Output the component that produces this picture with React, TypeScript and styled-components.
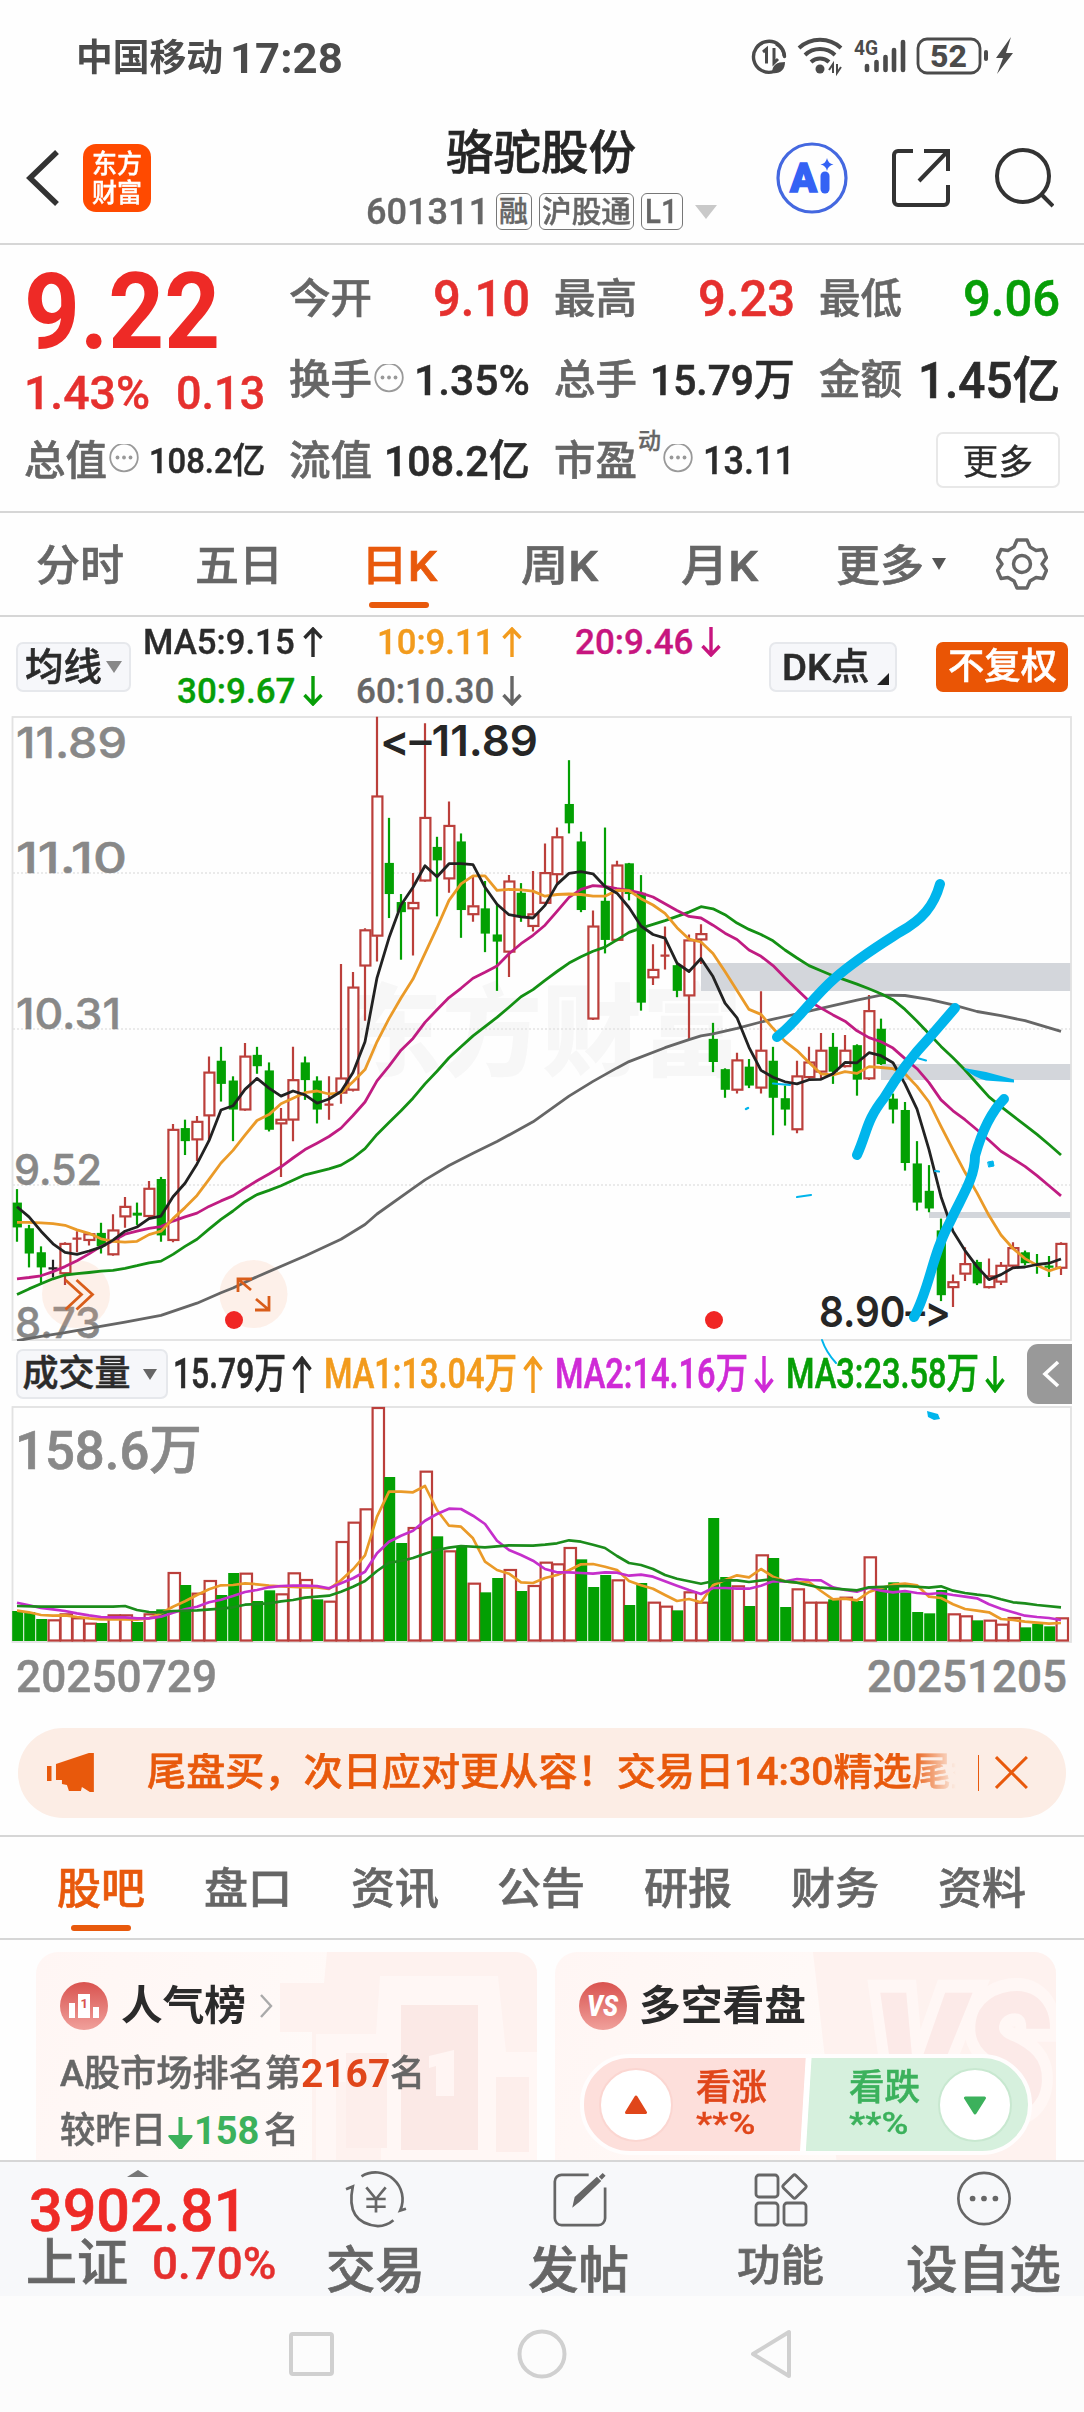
import React, { useLayoutEffect, useRef, useState } from "react";
import styled, { createGlobalStyle } from "styled-components";

const ORANGE = "#e8590c";
const GRAY = "#666";
const DARK = "#2b2b2b";
const RED = "#ee2a26";
const GREEN = "#079e07";
const LINE = "#d6d6d6";
const UP = "#bb3f3b";
const DOWN = "#03a003";
const INK = "#00b5ec";

const Global = createGlobalStyle`
  * { box-sizing: border-box; }
  body { margin: 0; background: #fff; }
  body, svg text { font-family: Roboto, "Noto Sans CJK SC", sans-serif; }
`;

/* ---------- text fitted to a column width ---------- */

const FitBox = styled.span<{ $w: number; $size: number; $color: string; $weight: number; $shift: number; $stroke: number }>`
  display: block;
  flex: none;
  width: ${(p) => p.$w}px;
  height: ${(p) => p.$size}px;
  font-size: ${(p) => p.$size}px;
  line-height: 1;
  font-weight: ${(p) => p.$weight};
  color: ${(p) => p.$color};
  -webkit-text-stroke: ${(p) => p.$stroke}px currentColor;
  margin-top: ${(p) => p.$shift}px;
  white-space: nowrap;
`;
const FitInner = styled.span`
  display: inline-block;
  transform-origin: 0 50%;
`;

type FitProps = { w: number; size: number; color?: string; weight?: number; shift?: number; children: React.ReactNode };

/* Medium text is thickened with a fine stroke; Chinese glyphs need a little more of it than digits. */
const isHan = (t: React.ReactNode) => typeof t === "string" && /[\u4e00-\u9fff]/.test(t);

function Fit({ w, size, color = GRAY, weight = 500, shift = 0, children }: FitProps) {
  const ref = useRef<HTMLSpanElement>(null);
  const [scale, setScale] = useState(1);
  useLayoutEffect(() => {
    if (ref.current) setScale(w / ref.current.offsetWidth);
  }, [w]);
  const stroke = weight !== 500 ? 0 : size * (isHan(children) ? 0.014 : 0.01);
  return (
    <FitBox $w={w} $size={size} $color={color} $weight={weight} $shift={shift} $stroke={stroke}>
      <FitInner ref={ref} style={{ transform: `scaleX(${scale})` }}>
        {children}
      </FitInner>
    </FitBox>
  );
}

/* ---------- page and shared pieces ---------- */

const Page = styled.main`
  position: relative;
  width: 1084px;
  height: 2412px;
  overflow: hidden;
  display: flex;
  flex-direction: column;
  background: #fefefe;
  > * { flex-shrink: 0; }
`;
const Row = styled.div<{ $gap?: number }>`
  display: flex;
  align-items: center;
  gap: ${(p) => p.$gap ?? 0}px;
`;
const Caret = styled.i<{ $w: number; $h: number; $color: string }>`
  width: 0;
  height: 0;
  border: solid transparent;
  border-width: ${(p) => p.$h}px ${(p) => p.$w / 2}px 0;
  border-top-color: ${(p) => p.$color};
`;

/* ---------- status bar ---------- */

const StatusBar = styled.header`
  height: 112px;
  padding: 4px 68px 0 76px;
  display: flex;
  align-items: center;
  justify-content: space-between;
`;

function StatusIcons() {
  const c = "#4b4b4b";
  return (
    <svg width="266" height="44" viewBox="750 36 266 44" fill="none" stroke={c} strokeWidth="3.4">
      <path d="M774 71.5a15.5 15.5 0 1 1 10.500-15" strokeLinecap="round" />
      <path d="M784 56a15.500 15.500 0 0 0-8-12M763 52l3.500-3v14.500M774 48v15l4-4" strokeWidth="3" />
      <path d="M772 73c0-8 5-11 13-11 0 8-5 12-13 11z" fill={c} stroke="none" />
      <path d="M799 48a31 31 0 0 1 42 0M805 55a22 22 0 0 1 30 0M811 62a13 13 0 0 1 18 0" strokeWidth="4" />
      <circle cx="820" cy="69" r="4.500" fill={c} stroke="none" />
      <path d="M829 70l4-6v9M837 64v9l4-6" strokeWidth="2" />
      <g strokeWidth="4.600" strokeLinecap="round">
        <path d="M867 66v4M876.500 62v8M885.500 57v13M894 50v20M903 42v28" />
      </g>
      <text x="854" y="55" fontSize="20" fontWeight="700" fill={c} stroke="none" textLength="24" lengthAdjust="spacingAndGlyphs">
        4G
      </text>
      <rect x="918" y="39" width="62" height="34" rx="9" strokeWidth="2.800" />
      <text x="930" y="67" fontSize="31" fontWeight="800" fill={c} stroke="none" textLength="37" lengthAdjust="spacingAndGlyphs">
        52
      </text>
      <path d="M986 52v7" strokeWidth="4" strokeLinecap="round" />
      <path d="M1011 37l-15 21h7l-6 16 16-21h-7z" fill={c} stroke="none" />
    </svg>
  );
}

/* ---------- title bar ---------- */

const TitleBar = styled.nav`
  height: 133px;
  padding: 0 30px 0 25px;
  display: grid;
  grid-template-columns: 1fr auto 1fr;
  align-items: center;
  border-bottom: 2px solid ${LINE};
`;
const Logo = styled.div`
  width: 68px;
  height: 68px;
  border-radius: 13px;
  background: #ff4a00;
  padding: 7px 9px 0;
  margin-left: 23px;
`;
const TitleColumn = styled.div`
  display: flex;
  flex-direction: column;
  align-items: center;
  gap: 17px;
  padding: 4px 0 0 3px;
`;
const Tag = styled.span<{ $w: number }>`
  width: ${(p) => p.$w}px;
  height: 37px;
  border: 1.500px solid #777;
  border-radius: 6px;
  display: flex;
  align-items: center;
  justify-content: center;
`;
const TitleActions = styled.div`
  display: flex;
  justify-content: flex-end;
  align-items: center;
  gap: 43px;
`;
const TriangleSpacer = styled.span`
  margin-left: 5px;
  display: flex;
`;
const CodeRow = styled.div`
  display: flex;
  align-items: center;
  gap: 7px;
`;

function TitleHeader() {
  return (
    <TitleBar>
      <Row>
        <svg width="35" height="60" viewBox="0 0 35 60" fill="none" stroke="#333" strokeWidth="5.500">
          <path d="M32 4L5 30l27 26" />
        </svg>
        <Logo>
          <Fit w={50} size={26} color="#fff" weight={500}>东方</Fit>
          <Fit w={50} size={26} color="#fff" weight={500} shift={3}>财富</Fit>
        </Logo>
      </Row>
      <TitleColumn>
        <Fit w={190} size={47} color="#262626">骆驼股份</Fit>
        <CodeRow>
          <Fit w={123} size={37}>601311</Fit>
          <Tag $w={36}><Fit w={29} size={29} shift={1}>融</Fit></Tag>
          <Tag $w={95}><Fit w={89} size={30} shift={1}>沪股通</Fit></Tag>
          <Tag $w={42}><Fit w={33} size={33}>L1</Fit></Tag>
          <TriangleSpacer><Caret $w={22} $h={14} $color="#c9c9c9" /></TriangleSpacer>
        </CodeRow>
      </TitleColumn>
      <TitleActions>
        <svg width="72" height="72" viewBox="0 0 72 72">
          <circle cx="36" cy="36" r="34" fill="none" stroke="#4468e0" strokeWidth="3.200" />
          <text x="14" y="50" fontSize="41" fontWeight="900" fill="#3462f4" stroke="#3462f4" strokeWidth="1.500" textLength="27" lengthAdjust="spacingAndGlyphs">A</text>
          <path d="M49 34v13" stroke="#3462f4" strokeWidth="9" strokeLinecap="round" />
          <path d="M51 16q1 5.500 6.500 6.500Q52 23.500 51 29q-1-5.500-6.500-6.500Q50 21.500 51 16z" fill="#3462f4" />
        </svg>
        <svg width="60" height="60" viewBox="0 0 60 60" fill="none" stroke="#333" strokeWidth="4">
          <path d="M22 3H7a4 4 0 0 0-4 4v46a4 4 0 0 0 4 4h46a4 4 0 0 0 4-4V37M33 3h24v20M57 3L28 33" />
        </svg>
        <svg width="60" height="60" viewBox="0 0 60 60" fill="none" stroke="#333" strokeWidth="4">
          <circle cx="29" cy="28" r="26" />
          <path d="M47 46l12 12" />
        </svg>
      </TitleActions>
    </TitleBar>
  );
}

/* ---------- quote summary ---------- */

const Quotes = styled.section`
  height: 268px;
  padding: 13px 24px 0 24px;
  display: grid;
  grid-template-columns: repeat(4, 241px);
  grid-template-rows: 81px 81px 80px;
  column-gap: 24px;
  border-bottom: 2px solid ${LINE};
`;
const PriceCell = styled.div`
  grid-row: span 2;
  padding-top: 2px;
`;
const Cell = styled.div`
  display: flex;
  align-items: center;
  justify-content: space-between;
`;
const MoreButton = styled.button`
  margin-left: auto;
  width: 124px;
  height: 56px;
  padding: 0;
  border: 2px solid #e8e8e8;
  border-radius: 7px;
  background: #fff;
  display: flex;
  align-items: center;
  justify-content: center;
`;
const Sup = styled.span`
  margin: 0 0 38px 1px;
`;

const Info = () => (
  <svg width="32" height="32" viewBox="0 0 32 32">
    <circle cx="17" cy="13.500" r="13.800" fill="none" stroke="#999" strokeWidth="1.800" />
    <g fill="#999">
      <circle cx="10.500" cy="13.500" r="1.900" />
      <circle cx="17" cy="13.500" r="1.900" />
      <circle cx="23.500" cy="13.500" r="1.900" />
    </g>
  </svg>
);
const Label = ({ children }: { children: string }) => <Fit w={83} size={41} shift={2}>{children}</Fit>;

function QuoteGrid() {
  return (
    <Quotes>
      <PriceCell>
        <Fit w={196} size={105} color={RED} weight={700}>9.22</Fit>
        <Row $gap={26}>
          <Fit w={126} size={46} color="#e5302e" shift={5}>1.43%</Fit>
          <Fit w={89} size={46} color="#e5302e" shift={5}>0.13</Fit>
        </Row>
      </PriceCell>
      <Cell><Label>今开</Label><Fit w={97} size={50} color="#e5302e" shift={1}>9.10</Fit></Cell>
      <Cell><Label>最高</Label><Fit w={97} size={50} color="#e5302e" shift={1}>9.23</Fit></Cell>
      <Cell><Label>最低</Label><Fit w={97} size={50} color={GREEN} shift={1}>9.06</Fit></Cell>
      <Cell><Row><Label>换手</Label><Info /></Row><Fit w={116} size={43} color={DARK} shift={2}>1.35%</Fit></Cell>
      <Cell><Label>总手</Label><Fit w={145} size={43} color={DARK} shift={2}>15.79万</Fit></Cell>
      <Cell><Label>金额</Label><Fit w={142} size={50} color={DARK} shift={2}>1.45亿</Fit></Cell>
      <Cell><Row><Label>总值</Label><Info /></Row><Fit w={116} size={35} color={DARK} shift={2}>108.2亿</Fit></Cell>
      <Cell><Label>流值</Label><Fit w={146} size={43} color={DARK} shift={3}>108.2亿</Fit></Cell>
      <Cell>
        <Row><Label>市盈</Label><Sup><Fit w={23} size={23}>动</Fit></Sup><Info /></Row>
        <Fit w={92} size={38} color={DARK} shift={2}>13.11</Fit>
      </Cell>
      <Cell><MoreButton><Fit w={71} size={35} color={DARK}>更多</Fit></MoreButton></Cell>
    </Quotes>
  );
}

/* ---------- period tabs ---------- */

const Periods = styled.nav`
  height: 104px;
  padding-right: 36px;
  display: grid;
  grid-template-columns: 159px 159px 162px 159px 160px 1fr auto;
  align-items: center;
  border-bottom: 2px solid ${LINE};
`;
const Tab = styled.div<{ $active?: boolean; $top?: number }>`
  height: 102px;
  display: flex;
  flex-direction: column;
  align-items: center;
  padding-top: ${(p) => p.$top ?? 32}px;
  gap: 14px;
  &::after {
    content: "";
    width: 60px;
    height: 6px;
    border-radius: 3px;
    background: ${(p) => (p.$active ? ORANGE : "transparent")};
  }
`;
const MoreTab = styled.div`
  padding-left: 37px;
  display: flex;
  align-items: center;
  gap: 8px;
`;

function PeriodTabs() {
  return (
    <Periods>
      <Tab><Fit w={88} size={43}>分时</Fit></Tab>
      <Tab><Fit w={88} size={43}>五日</Fit></Tab>
      <Tab $active><Fit w={76} size={43} color={ORANGE}>日K</Fit></Tab>
      <Tab><Fit w={77} size={43}>周K</Fit></Tab>
      <Tab><Fit w={77} size={43}>月K</Fit></Tab>
      <MoreTab><Tab><Fit w={88} size={43}>更多</Fit></Tab><Caret $w={15} $h={12} $color="#555" /></MoreTab>
      <svg width="52" height="54" viewBox="0 0 52 54" fill="none" stroke={GRAY} strokeWidth="3.400" strokeLinejoin="round">
        <path d="M21 3h10l3 7 6 3.500 7-1 3.500 8L46 27l4.500 6.500-3.500 8-7-1-6 3.500-3 7H21l-3-7-6-3.500-7 1-3.500-8L6 27l-4.500-6.500 3.500-8 7 1 6-3.500z" />
        <circle cx="26" cy="27" r="8.500" />
      </svg>
    </Periods>
  );
}

/* ---------- moving-average legend ---------- */

const Legend = styled.div`
  height: 99px;
  padding: 0 16px;
  display: flex;
  align-items: center;
`;
const Chip = styled.div<{ $w: number; $solid?: boolean }>`
  flex: none;
  width: ${(p) => p.$w}px;
  height: 50px;
  border-radius: 7px;
  border: ${(p) => (p.$solid ? "0" : "2px solid #e6e8ec")};
  background: ${(p) => (p.$solid ? "#ea5505" : "#f6f7fa")};
  display: flex;
  align-items: center;
  justify-content: center;
  gap: 4px;
`;
const MaGrid = styled.div`
  width: 577px;
  margin-left: 12px;
  display: grid;
  grid-template-columns: 180px 199px 199px;
  row-gap: 15px;
`;
const MaItem = styled.div`
  display: flex;
  align-items: center;
  justify-content: flex-end;
  gap: 8px;
  height: 34px;
`;
const ChipGap = styled.span<{ $w: number }>`
  width: ${(p) => p.$w}px;
  flex: none;
`;
const CornerMark = styled.i`
  align-self: flex-end;
  width: 0;
  height: 0;
  margin-bottom: 5px;
  margin-left: 3px;
  border-left: 12px solid transparent;
  border-bottom: 12px solid #222;
`;

function Arrow({ up, color, h = 30, w = 20 }: { up?: boolean; color: string; h?: number; w?: number }) {
  return (
    <svg width={w} height={h} viewBox="0 0 20 30" preserveAspectRatio="none" fill="none" stroke={color} strokeWidth="3.400">
      <path d={up ? "M10 30V2M1.500 11L10 2l8.500 9" : "M10 0v28M1.500 19l8.500 9 8.500-9"} />
    </svg>
  );
}

const MAS = [
  { text: "MA5:9.15", w: 152, color: DARK, up: true },
  { text: "10:9.11", w: 117, color: "#f29b1d", up: true },
  { text: "20:9.46", w: 118, color: "#c7157f", up: false },
  { text: "30:9.67", w: 118, color: GREEN, up: false },
  { text: "60:10.30", w: 138, color: GRAY, up: false },
];

function LegendRow() {
  return (
    <Legend>
      <Chip $w={115}><Fit w={77} size={38} color={DARK}>均线</Fit><Caret $w={16} $h={12} $color="#888" /></Chip>
      <MaGrid>
        {MAS.map((m) => (
          <MaItem key={m.text}>
            <Fit w={m.w} size={35} color={m.color} shift={1}>{m.text}</Fit>
            <Arrow up={m.up} color={m.color} />
          </MaItem>
        ))}
      </MaGrid>
      <ChipGap $w={49} />
      <Chip $w={128}><ChipGap $w={1} /><Fit w={88} size={37} color={DARK} shift={1}>DK点</Fit><CornerMark /></Chip>
      <ChipGap $w={39} />
      <Chip $w={132} $solid><Fit w={109} size={36} color="#fff">不复权</Fit></Chip>
    </Legend>
  );
}

/* ---------- candlestick chart ---------- */

/* colour (g/r/k), high, body top, body bottom, low in plot units */
type Candle = [string, number, number, number, number];
const CANDLES: Candle[] = [
  ["g", 1162, 1194, 1253, 1287], ["g", 1247, 1255, 1315, 1348], ["g", 1298, 1312, 1348, 1385], ["k", 1330, 1349, 1352, 1372],
  ["r", 1288, 1291, 1363, 1390], ["r", 1262, 1278, 1281, 1312], ["r", 1266, 1268, 1284, 1296], ["g", 1242, 1266, 1298, 1315],
  ["r", 1222, 1259, 1318, 1320], ["r", 1181, 1203, 1228, 1254], ["g", 1194, 1218, 1225, 1247], ["r", 1143, 1160, 1227, 1230],
  ["g", 1133, 1138, 1272, 1287], ["r", 1007, 1020, 1284, 1288], ["g", 997, 1017, 1048, 1081], ["r", 988, 1001, 1045, 1095],
  ["r", 847, 884, 988, 1045], ["g", 824, 857, 912, 954], ["g", 894, 904, 973, 1048], ["r", 815, 846, 974, 976],
  ["g", 824, 843, 870, 888], ["g", 861, 880, 1021, 1025], ["r", 969, 996, 1007, 1133], ["r", 824, 902, 998, 1048],
  ["g", 847, 861, 903, 950], ["g", 894, 904, 973, 1006], ["r", 894, 959, 964, 997], ["r", 627, 898, 934, 959],
  ["r", 646, 682, 927, 930], ["r", 542, 546, 632, 762], ["r", 40, 228, 561, 621], ["g", 280, 387, 461, 518],
  ["g", 461, 480, 504, 617], ["r", 411, 481, 496, 607], ["r", 55, 279, 430, 432], ["g", 325, 349, 381, 514],
  ["r", 241, 298, 425, 458], ["g", 317, 336, 499, 565], ["r", 420, 489, 510, 527], ["g", 430, 495, 555, 599],
  ["g", 484, 557, 574, 691], ["r", 416, 430, 599, 658], ["g", 435, 458, 515, 527], ["r", 406, 508, 538, 550],
  ["r", 341, 410, 483, 485], ["r", 303, 325, 415, 435], ["g", 143, 247, 293, 317], ["g", 313, 336, 499, 504],
  ["r", 500, 537, 758, 760], ["g", 303, 477, 570, 602], ["r", 382, 392, 571, 573], ["g", 387, 388, 461, 476],
  ["g", 416, 458, 719, 738], ["r", 580, 640, 660, 677], ["r", 538, 606, 609, 640], ["g", 627, 630, 691, 706],
  ["r", 557, 570, 703, 807], ["r", 533, 555, 570, 627], ["g", 767, 805, 860, 884], ["g", 875, 877, 926, 945],
  ["r", 838, 855, 927, 935], ["g", 853, 871, 916, 922], ["r", 692, 832, 922, 935], ["g", 824, 857, 945, 1034],
  ["g", 916, 946, 973, 1011], ["r", 857, 893, 1021, 1029], ["r", 824, 860, 897, 900], ["r", 791, 832, 884, 900],
  ["g", 791, 824, 883, 912], ["r", 796, 832, 871, 873], ["g", 818, 820, 902, 940], ["r", 701, 738, 900, 903],
  ["g", 757, 781, 865, 867], ["g", 935, 947, 973, 1006], ["g", 955, 974, 1100, 1118], ["g", 1048, 1101, 1194, 1213],
  ["g", 1105, 1166, 1208, 1217], ["g", 1232, 1260, 1414, 1428], ["r", 1365, 1382, 1396, 1442], ["r", 1300, 1339, 1364, 1380],
  ["g", 1330, 1335, 1386, 1390], ["r", 1327, 1368, 1396, 1398], ["r", 1335, 1343, 1383, 1390], ["r", 1288, 1301, 1345, 1350],
  ["g", 1308, 1312, 1338, 1343], ["g", 1316, 1338, 1342, 1363], ["g", 1321, 1344, 1348, 1371], ["r", 1288, 1291, 1350, 1366],
];
const MA5 = [1204, 1228, 1262, 1292, 1312, 1317, 1309, 1300, 1283, 1262, 1252, 1232, 1226, 1180, 1148, 1102, 1047, 974, 964, 925, 899, 922, 941, 929, 938, 958, 948, 930, 885, 812, 660, 565, 487, 445, 394, 420, 389, 389, 391, 445, 485, 510, 515, 518, 488, 438, 412, 408, 413, 443, 459, 493, 537, 557, 566, 625, 645, 614, 657, 720, 755, 825, 880, 896, 907, 912, 902, 901, 888, 861, 862, 838, 845, 862, 912, 972, 1068, 1180, 1262, 1308, 1346, 1377, 1365, 1349, 1347, 1341, 1338, 1328];
const MA10 = [1241, 1241, 1242, 1244, 1248, 1259, 1267, 1280, 1286, 1288, 1286, 1270, 1262, 1232, 1206, 1177, 1139, 1100, 1070, 1034, 999, 985, 959, 946, 933, 929, 936, 934, 907, 878, 812, 757, 708, 663, 602, 541, 476, 437, 418, 418, 452, 450, 451, 454, 466, 462, 461, 462, 466, 466, 452, 453, 472, 487, 507, 541, 568, 575, 602, 645, 690, 735, 747, 780, 811, 833, 861, 888, 891, 883, 887, 871, 873, 876, 888, 918, 955, 1013, 1068, 1122, 1171, 1225, 1271, 1303, 1327, 1343, 1356, 1347];
const MA20 = [1375, 1372, 1368, 1358, 1346, 1332, 1316, 1298, 1285, 1269, 1262, 1255, 1251, 1238, 1228, 1219, 1203, 1190, 1178, 1160, 1142, 1126, 1109, 1088, 1068, 1053, 1037, 1017, 987, 955, 905, 870, 832, 804, 766, 736, 707, 685, 661, 647, 632, 603, 579, 559, 535, 502, 469, 450, 441, 443, 448, 452, 459, 468, 484, 500, 514, 518, 535, 554, 569, 594, 609, 631, 660, 688, 715, 732, 748, 763, 786, 802, 812, 827, 852, 876, 909, 950, 976, 997, 1021, 1046, 1072, 1090, 1108, 1130, 1154, 1178];
const MA30 = [1412, 1399, 1387, 1375, 1366, 1363, 1360, 1357, 1355, 1350, 1344, 1337, 1333, 1317, 1298, 1281, 1257, 1234, 1214, 1192, 1175, 1165, 1154, 1141, 1128, 1121, 1114, 1105, 1088, 1066, 1032, 1004, 976, 946, 912, 882, 850, 824, 798, 776, 754, 730, 705, 688, 666, 645, 625, 610, 597, 587, 570, 552, 542, 533, 524, 514, 504, 491, 496, 510, 530, 545, 557, 572, 594, 613, 631, 643, 655, 665, 675, 686, 698, 712, 735, 763, 793, 823, 850, 879, 911, 943, 966, 988, 1010, 1032, 1056, 1081];
const MA60: [number, number][] = [[0, 1522], [2, 1512], [4, 1503], [6, 1493], [9, 1478], [12, 1462], [15, 1433], [17, 1408], [18, 1397], [20, 1370], [24, 1321], [27, 1281], [29, 1246], [30, 1221], [33, 1160], [34, 1140], [36, 1106], [38, 1077], [40, 1049], [43, 1002], [46, 941], [48, 906], [50, 874], [51, 859], [54, 826], [56, 807], [57, 798], [58, 793], [60, 780], [62, 765], [64, 752], [66, 739], [68, 726], [70, 713], [72, 701], [74, 702], [76, 711], [78, 724], [80, 740], [82, 750], [84, 762], [87, 787]];

const cx = (i: number) => 17 + 12 * i;
const priceY = (v: number) => 700 + v / 2.3757;
const volY = (v: number) => 1400 + v / 3;
const line = (vals: number[], y: (v: number) => number) => vals.map((v, i) => `${cx(i)},${y(v).toFixed(1)}`).join(" ");
const sparse = (vals: [number, number][], y: (v: number) => number) => vals.map(([i, v]) => `${cx(i)},${y(v).toFixed(1)}`).join(" ");

const ChartFrame = styled.section`
  height: 625px;
  svg { display: block; }
`;
const AxisText = styled.text`
  && { font-family: Inter, sans-serif; }
  font-feature-settings: "calt" 0;
  font-size: 43px;
`;

function CandleShape({ c, i }: { c: Candle; i: number }) {
  const [kind, high, top, bottom, low] = c;
  const x = cx(i);
  const [h, t, b, l] = [high, top, bottom, low].map(priceY);
  const color = kind === "g" ? DOWN : kind === "k" ? "#222" : UP;
  if (bottom - top < 6) {
    return <path d={`M${x} ${h}V${l}M${x - 4.5} ${(t + b) / 2}h9`} stroke={color} strokeWidth="2.200" />;
  }
  if (kind === "g") {
    return (
      <g fill={color}>
        <rect x={x - 1.1} y={h} width="2.200" height={l - h} />
        <rect x={x - 4.3} y={t} width="9.200" height={b - t} />
      </g>
    );
  }
  return (
    <g stroke={color} strokeWidth="2.200" fill="none">
      <path d={`M${x} ${h}V${t}M${x} ${b}V${l}`} />
      <rect x={x - 4.6} y={t + 0.5} width="10" height={Math.max(b - t - 1, 2)} fill="#fff" />
    </g>
  );
}

const AXIS: [string, number, number, number][] = [
  ["11.89", 758, 16, 111], ["11.10", 873, 16, 111], ["10.31", 1029, 16, 105], ["9.52", 1185, 14, 88], ["8.73", 1338, 15, 86],
];

function PriceChart() {
  return (
    <ChartFrame>
      <svg width="1084" height="625" viewBox="0 716 1084 625">
        <text x="342" y="1068" fontSize="100" fontWeight="900" fill="#f7f7f7">东方财富</text>
        <rect x="701" y="963" width="370" height="28" fill="#d3d6db" />
        <rect x="881" y="1064" width="190" height="16" fill="#d3d6db" />
        <rect x="929" y="1212" width="142" height="6" fill="#d3d6db" />
        <g stroke="#e3e3e3" strokeWidth="1.500" strokeDasharray="2 2">
          <path d="M13 873H1071M13 1029H1071M13 1185H1071" />
        </g>
        <rect x="12.500" y="717" width="1058.500" height="623" fill="none" stroke="#e2e2e2" strokeWidth="1.800" />
        <g fill="#888" fontWeight="500" stroke="#888" strokeWidth=".5">
          {AXIS.map(([t, y, x, w]) => (
            <AxisText key={t} x={x} y={y} textLength={w} lengthAdjust="spacingAndGlyphs">{t}</AxisText>
          ))}
        </g>
        <circle cx="76" cy="1294" r="34" fill="#f7a57a" fillOpacity=".16" />
        <circle cx="253.500" cy="1294" r="34" fill="#f7a57a" fillOpacity=".16" />
        {CANDLES.map((c, i) => <CandleShape key={i} c={c} i={i} />)}
        <g fill="none" strokeWidth="2.800" strokeLinejoin="round">
          <polyline points={sparse(MA60, priceY)} stroke="#666" />
          <polyline points={line(MA30, priceY)} stroke="#149014" />
          <polyline points={line(MA20, priceY)} stroke="#c01c82" />
          <polyline points={line(MA10, priceY)} stroke="#ea9a28" />
          <polyline points={line(MA5, priceY)} stroke="#222" />
        </g>
        <g fill="none" stroke="#d95d1a" strokeWidth="2.800">
          <path d="M65.500 1280l16 14.500-16 15M76.500 1280l16 14.500-16 15M251 1290l-13-11M238 1292v-13h14M256 1299l13 11M269 1296v14h-14" />
        </g>
        <circle cx="234" cy="1320" r="9" fill="#f02624" />
        <circle cx="714" cy="1320" r="9" fill="#f02624" />
        <g fill="#262626" fontWeight="600">
          <AxisText x="380" y="756" textLength="158" lengthAdjust="spacingAndGlyphs">&lt;–11.89</AxisText>
          <AxisText x="819" y="1327" textLength="132" lengthAdjust="spacingAndGlyphs">8.90–&gt;</AxisText>
        </g>
      </svg>
    </ChartFrame>
  );
}

/* ---------- volume ---------- */

const VolumeHead = styled.div`
  height: 65px;
  padding: 1px 12px 0 16px;
  display: flex;
  align-items: center;
`;
const VolumeItem = styled.div<{ $ml: number }>`
  margin-left: ${(p) => p.$ml}px;
  display: flex;
  align-items: center;
  gap: 6px;
`;
const Collapse = styled.button`
  margin-left: auto;
  width: 45px;
  height: 60px;
  padding: 0 0 0 2px;
  border: 0;
  border-radius: 11px 0 0 11px;
  background: #999;
  display: flex;
  align-items: center;
  justify-content: center;
`;
const VOL: [string, number][] = [
  ["g", 633], ["g", 636], ["g", 657], ["r", 658], ["r", 640], ["r", 652], ["r", 668], ["g", 669], ["r", 643], ["r", 643], ["g", 666],
  ["r", 640], ["g", 628], ["r", 516], ["g", 555], ["r", 578], ["r", 540], ["g", 585], ["g", 519], ["r", 518], ["g", 603], ["g", 571],
  ["r", 580], ["r", 517], ["r", 537], ["g", 598], ["r", 602], ["r", 423], ["r", 365], ["r", 325], ["r", 21], ["g", 231], ["g", 429],
  ["r", 381], ["r", 212], ["g", 409], ["r", 451], ["g", 438], ["r", 548], ["g", 577], ["g", 534], ["r", 507], ["g", 573], ["r", 555],
  ["r", 485], ["r", 490], ["r", 441], ["g", 478], ["g", 561], ["g", 525], ["r", 538], ["g", 615], ["g", 549], ["r", 605], ["r", 617],
  ["g", 631], ["r", 574], ["r", 605], ["g", 354], ["g", 531], ["r", 556], ["g", 618], ["r", 463], ["g", 474], ["g", 621], ["r", 565],
  ["r", 605], ["r", 605], ["g", 598], ["r", 590], ["g", 603], ["r", 469], ["g", 560], ["g", 547], ["g", 577], ["g", 636], ["g", 640],
  ["g", 570], ["r", 640], ["r", 646], ["g", 661], ["r", 659], ["r", 671], ["r", 651], ["g", 682], ["g", 671], ["g", 679], ["r", 652],
];
const VM1 = [632, 637, 645, 647, 646, 651, 655, 658, 658, 658, 659, 655, 640, 620, 604, 585, 568, 556, 555, 550, 553, 557, 559, 561, 562, 562, 567, 541, 508, 466, 350, 275, 275, 277, 258, 330, 377, 380, 415, 485, 510, 521, 547, 549, 534, 525, 511, 493, 492, 500, 510, 543, 556, 566, 585, 603, 597, 607, 556, 540, 526, 532, 507, 530, 544, 548, 546, 573, 598, 596, 601, 576, 564, 554, 551, 556, 590, 594, 613, 627, 632, 637, 657, 660, 665, 668, 671, 669];
const VM2 = [608, 616, 624, 628, 633, 640, 646, 651, 652, 652, 655, 655, 650, 638, 628, 620, 607, 599, 588, 576, 570, 562, 558, 557, 557, 558, 565, 550, 535, 515, 460, 425, 407, 392, 362, 342, 326, 327, 347, 372, 422, 450, 465, 482, 507, 517, 517, 519, 521, 517, 518, 527, 524, 530, 544, 557, 570, 582, 564, 564, 566, 566, 557, 544, 544, 537, 540, 541, 562, 570, 575, 563, 572, 577, 573, 579, 582, 579, 585, 590, 595, 613, 626, 637, 647, 651, 654, 660];
const VM3: [number, number][] = [[0, 618], [2, 620], [8, 620], [9, 618], [10, 630], [11, 636], [12, 637], [13, 633], [15, 631], [17, 626], [18, 622], [19, 614], [21, 610], [22, 604], [23, 600], [24, 593], [26, 587], [27, 575], [28, 560], [29, 543], [30, 513], [31, 488], [32, 483], [33, 474], [34, 461], [35, 450], [36, 443], [37, 438], [39, 442], [41, 436], [43, 437], [44, 434], [45, 430], [46, 421], [47, 425], [48, 434], [49, 444], [50, 468], [51, 489], [52, 495], [53, 507], [54, 525], [55, 536], [56, 544], [57, 551], [58, 544], [59, 541], [60, 541], [61, 546], [63, 537], [64, 544], [65, 548], [66, 556], [67, 563], [70, 571], [71, 562], [74, 558], [76, 563], [77, 559], [78, 572], [79, 579], [80, 584], [81, 588], [82, 598], [83, 607], [84, 610], [85, 615], [87, 622]];

const VOLUME_ITEMS = [
  { text: "15.79万", w: 113, color: DARK, up: true, ml: 5 },
  { text: "MA1:13.04万", w: 193, color: "#f29b1d", up: true, ml: 12 },
  { text: "MA2:14.16万", w: 193, color: "#cf2ad6", up: false, ml: 12 },
  { text: "MA3:23.58万", w: 193, color: GREEN, up: false, ml: 12 },
];
const Dates = styled.div`
  height: 84px;
  padding: 11px 17px 0 16px;
  display: flex;
  justify-content: space-between;
`;

function Volume() {
  return (
    <>
      <VolumeHead>
        <Chip $w={152}><Fit w={108} size={36} color={DARK}>成交量</Fit><ChipGap $w={4} /><Caret $w={15} $h={11} $color="#666" /><ChipGap $w={1} /></Chip>
        {VOLUME_ITEMS.map((v) => (
          <VolumeItem key={v.text} $ml={v.ml}>
            <Fit w={v.w} size={42} color={v.color}>{v.text}</Fit>
            <Arrow up={v.up} color={v.color} h={37} />
          </VolumeItem>
        ))}
        <Collapse>
          <svg width="18" height="28" viewBox="0 0 18 28" fill="none" stroke="#fff" strokeWidth="3.600"><path d="M16 2L3 14l13 12" /></svg>
        </Collapse>
      </VolumeHead>
      <svg width="1084" height="238" viewBox="0 1406 1084 238">
        <rect x="12.500" y="1407" width="1058.500" height="235" fill="none" stroke="#e2e2e2" strokeWidth="1.800" />
        <text x="15" y="1469" fontSize="54" fontWeight="500" fill="#888" stroke="#888" strokeWidth=".7" textLength="187" lengthAdjust="spacingAndGlyphs">158.6万</text>
        {VOL.map(([k, v], i) =>
          k === "g" ? (
            <rect key={i} x={cx(i) - 4.8} y={volY(v)} width="11" height={1641 - volY(v)} fill={DOWN} />
          ) : (
            <rect key={i} x={cx(i) - 4.4} y={volY(v) + 1} width="11.400" height={1639.5 - volY(v)} fill="#fff" stroke={UP} strokeWidth="2.200" />
          )
        )}
        <g fill="none" strokeWidth="2.700" strokeLinejoin="round">
          <polyline points={line(VM1, volY)} stroke="#ea9a28" />
          <polyline points={line(VM2, volY)} stroke="#c52fcb" />
          <polyline points={sparse(VM3, volY)} stroke="#1b8c1b" />
        </g>
      </svg>
      <Dates>
        <Fit w={201} size={44} color="#888">20250729</Fit>
        <Fit w={200} size={44} color="#888">20251205</Fit>
      </Dates>
    </>
  );
}

/* ---------- hand-drawn strokes over the charts ---------- */

const Sketch = styled.svg`
  position: absolute;
  left: 730px;
  top: 860px;
  pointer-events: none;
`;

function Strokes() {
  return (
    <Sketch width="340" height="580" viewBox="730 860 340 580" fill="none" stroke={INK} strokeLinecap="round" strokeLinejoin="round">
      <g strokeWidth="10">
        <path d="M777 1037C796 1023 812 998 835 978S878 946 900 932C922 920 934 906 940 884" />
        <path d="M955 1008L930 1037C910 1058 896 1078 884 1098C866 1121 868 1130 857 1155" />
        <path d="M1004 1099C988 1115 980 1138 975 1156C975 1178 962 1196 950 1222C932 1254 930 1288 914 1317" />
      </g>
      <path d="M964 1068l22 4 28 7.500v3l-28-2q-12-3-22-12z" fill={INK} stroke="none" />
      <path d="M773 1083.500l17 1.500M797 1197l14-2M919 1058.500l7 2M935 1171l4 .5" strokeWidth="2.200" />
      <path d="M746 1109l2-1" strokeWidth="2.500" />
      <path d="M988 1162l5-1 1 5-5 1z" fill={INK} strokeWidth="1" />
      <path d="M822 1340q4 12 14 23" strokeWidth="2" />
      <path d="M927 1411l11 3 2 5-6 1-6-3z" fill={INK} stroke="none" />
    </Sketch>
  );
}

/* ---------- promotion banner ---------- */

const Banner = styled.aside`
  margin: 0 18px 17px;
  height: 90px;
  border-radius: 45px;
  background: #fcede5;
  display: flex;
  align-items: center;
  padding: 0 37px 0 29px;
`;
const BannerText = styled.div`
  width: 815px;
  margin-left: 52px;
  padding-bottom: 1px;
  overflow: hidden;
  mask-image: linear-gradient(90deg, #000 94%, transparent 99.500%);
`;
const Divider = styled.i`
  width: 1.500px;
  height: 36px;
  margin: 0 16px 0 18px;
  background: ${ORANGE};
`;

function Promo() {
  return (
    <Banner>
      <svg width="48" height="42" viewBox="0 0 48 42" fill="#e8590c">
        <path d="M0 14h4.500v15H0zM9 12L42 1h5v39h-4l-8-5-1 4H22l-2-6-5-1v-4L9 28z" />
      </svg>
      <BannerText>
        <Fit w={843} size={39} color={ORANGE}>尾盘买，次日应对更从容！交易日14:30精选尾盘</Fit>
      </BannerText>
      <Divider />
      <svg width="34" height="34" viewBox="0 0 34 34" stroke={ORANGE} strokeWidth="3"><path d="M1 1l31 31M32 1L1 32" /></svg>
    </Banner>
  );
}

/* ---------- content tabs and cards ---------- */

const ContentTabs = styled.nav`
  height: 105px;
  padding: 0 58px 0 57px;
  display: flex;
  justify-content: space-between;
  border-top: 2px solid ${LINE};
  border-bottom: 2px solid ${LINE};
`;
const Cards = styled.section`
  height: 220px;
  padding: 12px 28px 0 36px;
  display: flex;
  gap: 18px;
  overflow: hidden;
`;
const Card = styled.article`
  position: relative;
  width: 501px;
  height: 240px;
  border-radius: 22px;
  background: linear-gradient(110deg, #fff6f4, #fffaf8 60%, #fff5f3);
  overflow: hidden;
  padding: 31px 25px 0 24px;
`;
const CardArt = styled.svg`
  position: absolute;
  left: 0;
  top: 0;
`;
const CardBody = styled.div`
  position: relative;
`;
const CardHead = styled.div<{ $gap?: number }>`
  display: flex;
  align-items: center;
  height: 46px;
  gap: ${(p) => p.$gap ?? 13}px;
`;
const TextLine = styled.div<{ $mt: number }>`
  display: flex;
  align-items: center;
  margin-top: ${(p) => p.$mt}px;
  height: 36px;
`;
const Vote = styled.div`
  width: 452px;
  height: 101px;
  margin: 25px 0 0 1px;
  border-radius: 50px;
  border: 4px solid #fffdfd;
  background: linear-gradient(93.500deg, #fddfdb 49.200%, #fff 49.400%, #fff 50.500%, #d6f0dd 50.700%);
  display: flex;
  align-items: center;
  justify-content: space-between;
  padding: 0 16px 0 15px;
`;
const VoteSide = styled.div<{ $gap: number }>`
  display: flex;
  align-items: center;
  gap: ${(p) => p.$gap}px;
`;
const VoteDisc = styled.div<{ $ring: string }>`
  width: 74px;
  height: 74px;
  border-radius: 50%;
  background: #fff;
  border: 2px solid ${(p) => p.$ring};
  display: flex;
  align-items: center;
  justify-content: center;
`;

function RankCard() {
  return (
    <Card>
      <CardArt width="501" height="240" viewBox="0 0 501 240">
        <path d="M291 0H501V240H276V80H244V31H288z" fill="#fef2ef" />
        <path d="M344 24H462L470 100H501V240H345V130H300V240H280V82H340z" fill="#fff7f5" />
        <path d="M365 53h77v145h-77z" fill="#fbe9e6" />
        <path d="M310 101h41v95h-41zM460 125h33v75h-33z" fill="#fdeeeb" />
        <path d="M393 104l25-6v46h-18v-30l-7 2z" fill="#fff5f3" />
      </CardArt>
      <CardBody>
        <CardHead>
          <svg width="48" height="48" viewBox="0 0 48 48">
            <defs><linearGradient id="disc" x2="0" y2="1"><stop stopColor="#d9534f" /><stop offset="1" stopColor="#f0a09b" /></linearGradient></defs>
            <circle cx="24" cy="24" r="24" fill="url(#disc)" />
            <path d="M9 21h6v15H9zM18 12h12v24H18zM33 25h6v11h-6z" fill="#fff" />
            <text x="20.500" y="26" fontSize="13" fontWeight="700" fill="#d9534f">1</text>
          </svg>
          <Fit w={125} size={41} color={DARK} weight={700} shift={1}>人气榜</Fit>
          <svg width="14" height="24" viewBox="0 0 14 24" fill="none" stroke="#aaa" strokeWidth="2.400"><path d="M2 1l10 11L2 23" /></svg>
        </CardHead>
        <TextLine $mt={27}>
          <Fit w={241} size={36}>A股市场排名第</Fit>
          <Fit w={89} size={38} color="#e0461a" weight={700}>2167</Fit>
          <Fit w={35} size={36}>名</Fit>
        </TextLine>
        <TextLine $mt={21}>
          <Fit w={106} size={36}>较昨日</Fit>
          <svg width="28" height="36" viewBox="0 0 28 36" fill="#3cb15c"><path d="M12.500 4h4v18h9q2 0 .5 2.500L16 36q-1.500 2-3 0L3 24.500Q1 22 4 22h8.500z" /></svg>
          <Fit w={65} size={38} color="#3cb15c" weight={700}>158</Fit>
          <ChipGap $w={5} />
          <Fit w={35} size={36}>名</Fit>
        </TextLine>
      </CardBody>
    </Card>
  );
}

function VoteCard() {
  return (
    <Card>
      <CardArt width="501" height="240" viewBox="0 0 501 240">
        <path d="M258 0H501V240H285z" fill="#fef2ef" />
        <text x="316" y="162" fontSize="170" fontWeight="900" fontStyle="italic" fill="#fceae8" stroke="#fff7f5" strokeWidth="26" paintOrder="stroke" textLength="178" lengthAdjust="spacingAndGlyphs">VS</text>
      </CardArt>
      <CardBody>
        <CardHead $gap={12}>
          <svg width="48" height="48" viewBox="0 0 48 48">
            <circle cx="24" cy="24" r="24" fill="url(#disc)" />
            <text x="8" y="34" fontSize="29" fontWeight="900" fontStyle="italic" fill="#fff" textLength="31" lengthAdjust="spacingAndGlyphs">VS</text>
          </svg>
          <Fit w={167} size={41} color={DARK} weight={700} shift={1}>多空看盘</Fit>
        </CardHead>
        <Vote>
          <VoteSide $gap={23}>
            <VoteDisc $ring="#fbd6d1">
              <svg width="24" height="20" viewBox="0 0 24 20"><path d="M12 2l9.500 15.500h-19z" fill="#e0461a" stroke="#e0461a" strokeWidth="3" strokeLinejoin="round" /></svg>
            </VoteDisc>
            <div>
              <Fit w={71} size={36} color="#e0461a">看涨</Fit>
              <Fit w={59} size={31} color="#e0461a" shift={2}>**%</Fit>
            </div>
          </VoteSide>
          <VoteSide $gap={18}>
            <div>
              <Fit w={71} size={36} color="#3cb15c">看跌</Fit>
              <Fit w={59} size={31} color="#3cb15c" shift={2}>**%</Fit>
            </div>
            <VoteDisc $ring="#c8e8d0">
              <svg width="24" height="20" viewBox="0 0 24 20"><path d="M12 18L2.500 3h19z" fill="#3cb15c" stroke="#3cb15c" strokeWidth="3" strokeLinejoin="round" /></svg>
            </VoteDisc>
          </VoteSide>
        </Vote>
      </CardBody>
    </Card>
  );
}

/* ---------- bottom bars ---------- */

const BottomBar = styled.footer`
  height: 136px;
  padding: 0 23px 0 26px;
  display: flex;
  justify-content: space-between;
  background: #f7f8fa;
  border-top: 2px solid ${LINE};
`;
const IndexBox = styled.div`
  width: 250px;
  display: flex;
  flex-direction: column;
`;
const Peak = styled.i`
  width: 0;
  height: 0;
  margin: 8px 0 0 101px;
  border: solid transparent;
  border-width: 0 11px 7px;
  border-bottom-color: #777;
`;
const IndexValue = styled.div`
  padding-left: 3px;
`;
const IndexRow = styled.div`
  display: flex;
  align-items: center;
  justify-content: space-between;
  height: 44px;
`;
const Action = styled.div<{ $w: number; $ml: number }>`
  width: ${(p) => p.$w}px;
  margin-left: ${(p) => p.$ml}px;
  padding-top: 8px;
  display: flex;
  flex-direction: column;
  align-items: center;
`;
const SystemNav = styled.div`
  height: 116px;
  display: flex;
  justify-content: center;
  align-items: center;
  background: #fcfcfc;
`;

function Bottom() {
  const icon = { width: 68, height: 60, fill: "none", stroke: GRAY, strokeWidth: 2.8 };
  return (
    <BottomBar>
      <IndexBox>
        <Peak />
        <IndexValue><Fit w={218} size={60} color={RED} shift={4}>3902.81</Fit></IndexValue>
        <IndexRow>
          <Fit w={102} size={51}>上证</Fit>
          <Fit w={124} size={45} color="#e5302e">0.70%</Fit>
        </IndexRow>
      </IndexBox>
      <Action $w={99} $ml={50}>
        <svg {...icon} viewBox="342 2170 68 60">
          <path d="M361 2176.500A28 28 0 0 1 401 2212l6-2M345 2190l7-3q-8 38 26 41 9 0 16-6" />
          <path d="M366 2188l10 12 10-12M376 2200v14M366 2200h20M366 2208h20" />
        </svg>
        <Fit w={99} size={50} shift={18}>交易</Fit>
      </Action>
      <Action $w={101} $ml={103}>
        <svg {...icon} viewBox="545 2170 68 60">
          <path d="M589 2175h-28a7 7 0 0 0-7 7v38a7 7 0 0 0 7 7h38a7 7 0 0 0 7-7v-32" />
          <path d="M572 2209l2.500-11 23-21 4.500 4.500-22 21zM599.500 2177l4-4 3 3-4 4z" fill={GRAY} stroke="none" />
        </svg>
        <Fit w={101} size={50} shift={18}>发帖</Fit>
      </Action>
      <Action $w={87} $ml={108}>
        <svg {...icon} viewBox="747 2170 68 60">
          <rect x="756" y="2175" width="22" height="22" rx="3" />
          <rect x="756" y="2203" width="22" height="22" rx="3" />
          <rect x="784" y="2203" width="22" height="22" rx="3" />
          <rect x="-8.800" y="-8.800" width="17.600" height="17.600" rx="2" transform="translate(794.500 2186.500) rotate(45)" />
        </svg>
        <Fit w={87} size={43} shift={15}>功能</Fit>
      </Action>
      <Action $w={155} $ml={82}>
        <svg {...icon} viewBox="949 2170 68 60">
          <circle cx="983" cy="2200" r="27" />
          <g fill={GRAY} stroke="none"><circle cx="971" cy="2200" r="3" /><circle cx="983" cy="2200" r="3" /><circle cx="995" cy="2200" r="3" /></g>
        </svg>
        <Fit w={155} size={51} shift={18}>设自选</Fit>
      </Action>
    </BottomBar>
  );
}

const TABS = ["股吧", "盘口", "资讯", "公告", "研报", "财务", "资料"];

export default function App() {
  return (
    <Page>
      <Global />
      <StatusBar>
        <Row $gap={7}>
          <Fit w={147} size={37} color="#4b4b4b" weight={700}>中国移动</Fit>
          <Fit w={113} size={43} color="#4b4b4b" weight={700}>17:28</Fit>
        </Row>
        <StatusIcons />
      </StatusBar>
      <TitleHeader />
      <QuoteGrid />
      <PeriodTabs />
      <LegendRow />
      <PriceChart />
      <Volume />
      <Promo />
      <ContentTabs>
        {TABS.map((t, i) => (
          <Tab key={t} $active={i === 0} $top={31}>
            <Fit w={88} size={43} color={i === 0 ? ORANGE : GRAY}>{t}</Fit>
          </Tab>
        ))}
      </ContentTabs>
      <Cards>
        <RankCard />
        <VoteCard />
      </Cards>
      <Bottom />
      <SystemNav>
        <svg width="1084" height="116" viewBox="0 2296 1084 116" fill="none" stroke="#d0d0d0" strokeWidth="4" strokeLinejoin="round">
          <rect x="291" y="2334" width="41" height="40" rx="2" />
          <circle cx="542" cy="2354" r="22.500" />
          <path d="M789 2332v44l-36-22z" />
        </svg>
      </SystemNav>
      <Strokes />
    </Page>
  );
}
